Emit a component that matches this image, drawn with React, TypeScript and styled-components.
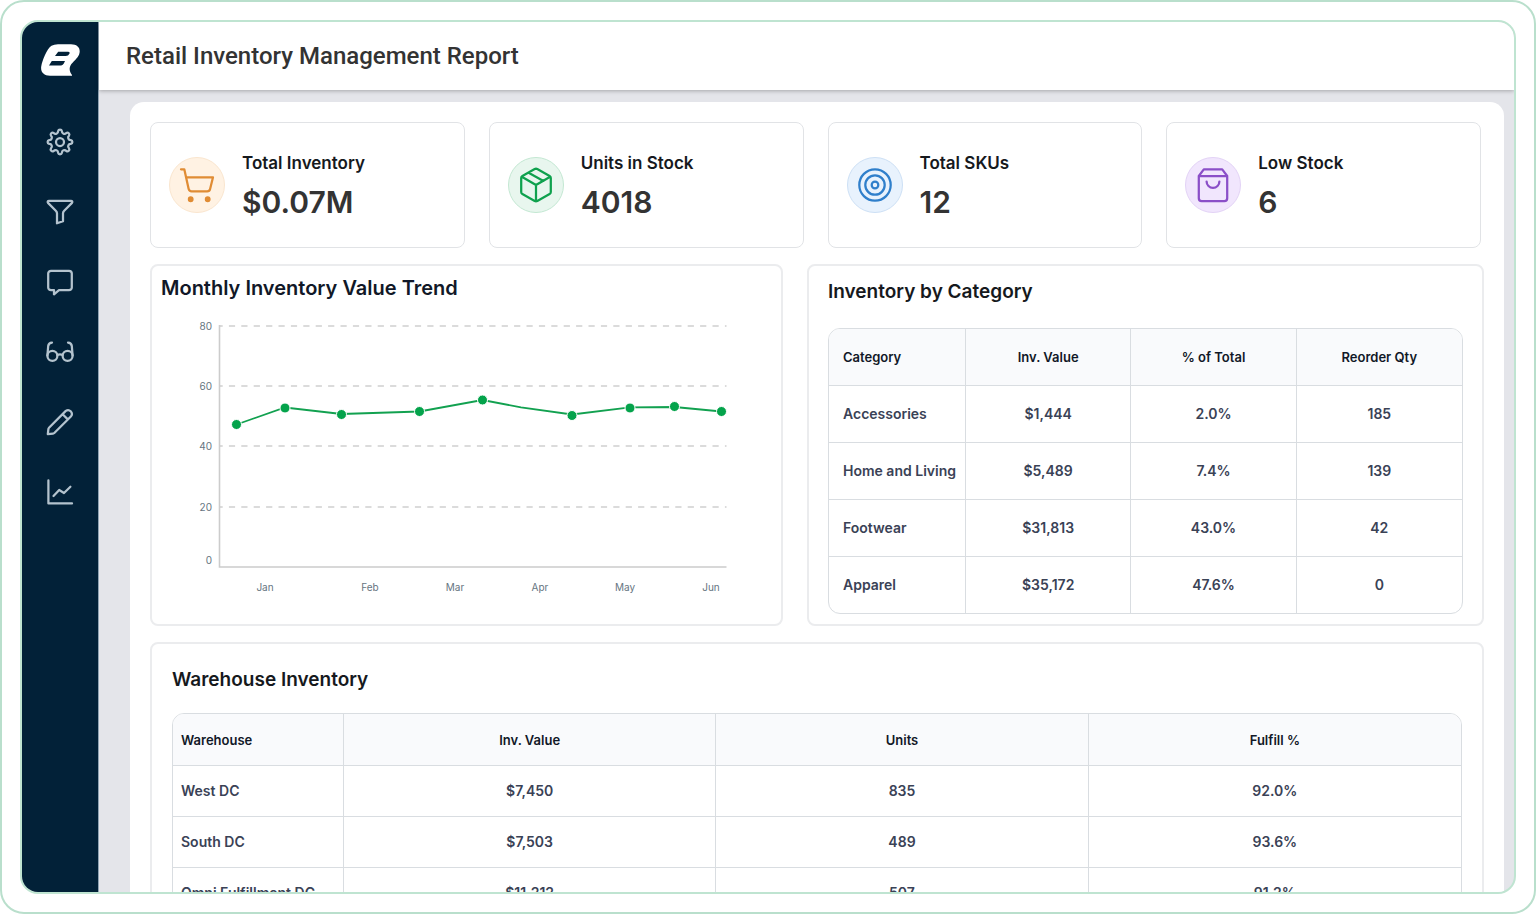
import React from "react";
import styled, { createGlobalStyle } from "styled-components";

const GlobalStyle = createGlobalStyle`
  *, *::before, *::after { box-sizing: border-box; }
  body {
    margin: 0;
    background: #ffffff;
    font-family: Inter, "Liberation Sans", sans-serif;
    color: #16191d;
  }
`;

const Frame = styled.div`
  height: 100vh;
  padding: 18px;
  border: 2px solid #b9dfcc;
  border-radius: 24px;
`;

const Shell = styled.div`
  display: flex;
  height: 100%;
  overflow: hidden;
  border: 2px solid #bfe4d1;
  border-radius: 18px;
  background: #e4e5ea;
`;

const Sidebar = styled.aside`
  flex: none;
  display: flex;
  flex-direction: column;
  align-items: center;
  width: 77px;
  padding-top: 22px;
  gap: 44px;
  background: #022138;
  border-right: 1px solid #8fa3b3;
`;

const Nav = styled.nav`
  display: flex;
  flex-direction: column;
  gap: 26px;
`;

const NavButton = styled.button`
  display: grid;
  place-items: center;
  width: 44px;
  height: 44px;
  padding: 0;
  border: 0;
  background: none;
  color: #b4c3ce;
  cursor: pointer;
`;

const Main = styled.main`
  flex: 1;
  min-width: 0;
  display: flex;
  flex-direction: column;
`;

const Header = styled.header`
  flex: none;
  display: flex;
  align-items: center;
  height: 68px;
  padding: 0 27px;
  background: #ffffff;
  box-shadow: 0 1px 4px rgba(0, 0, 0, 0.28);
`;

const Title = styled.h1`
  margin: 0;
  font: 500 24px/32px Roboto, "Liberation Sans", sans-serif;
  color: #333333;
`;

const Scroller = styled.div`
  flex: 1;
  min-height: 0;
  overflow: hidden;
  padding: 12px 10px 0 31px;
`;

const Board = styled.div`
  display: flex;
  flex-direction: column;
  gap: 16px;
  padding: 20px;
  border-radius: 14px;
  background: #ffffff;
`;

const KpiRow = styled.section`
  display: grid;
  grid-template-columns: repeat(4, 1fr);
  gap: 24px;
  padding-right: 3px;
`;

const KpiCard = styled.article`
  display: flex;
  align-items: center;
  gap: 17px;
  height: 126px;
  padding: 0 18px;
  border: 1px solid #e1e3e6;
  border-radius: 8px;
`;

const KpiBadge = styled.div<{ $ink: string; $fill: string; $edge: string }>`
  flex: none;
  display: grid;
  place-items: center;
  width: 56px;
  height: 56px;
  border: 1px solid ${(p) => p.$edge};
  border-radius: 50%;
  background: ${(p) => p.$fill};
  color: ${(p) => p.$ink};
`;

const KpiText = styled.div`
  display: flex;
  flex-direction: column;
  gap: 8px;
`;

const KpiLabel = styled.h2`
  margin: 0;
  font-size: 17px;
  font-weight: 600;
  line-height: 26px;
`;

const KpiValue = styled.p`
  margin: 0;
  font-size: 30px;
  font-weight: 600;
  line-height: 36px;
  color: #333333;
`;

const MiddleRow = styled.div`
  display: grid;
  grid-template-columns: 633fr 677fr;
  gap: 24px;
`;

const Panel = styled.section<{ $pad: string }>`
  min-width: 0;
  padding: ${(p) => p.$pad};
  border: 2px solid #ebecee;
  border-radius: 8px;
`;

const PanelTitle = styled.h2<{ $gap: number; $large?: boolean }>`
  margin: 0 0 ${(p) => p.$gap}px;
  font-size: ${(p) => (p.$large ? 20 : 19)}px;
  font-weight: 600;
  line-height: 28px;
  color: ${(p) => (p.$large ? "#111827" : "#16191d")};
`;

const Chart = styled.svg`
  display: block;
  width: 100%;
  height: auto;
  font-size: 10px;
  fill: #66757f;
`;

const TableFrame = styled.div`
  overflow: hidden;
  border: 1px solid #d9dde1;
  border-radius: 12px;
`;

const Table = styled.table<{ $first: number; $inset: number; $head: number; $row: number }>`
  width: 100%;
  table-layout: fixed;
  border-collapse: separate;
  border-spacing: 0;
  font-size: 14px;
  line-height: 20px;
  text-align: center;

  th, td {
    height: ${(p) => p.$row}px;
    padding: 0 8px;
    border-right: 1px solid #d9dde1;
    border-bottom: 1px solid #d9dde1;
    font-weight: 600;
    color: #3a4256;
  }
  thead th {
    height: ${(p) => p.$head}px;
    background: #f9fafc;
    font-size: 13px;
    color: #111827;
  }
  tr > :first-child {
    width: ${(p) => p.$first}px;
    padding: 0 0 0 ${(p) => p.$inset}px;
    text-align: left;
    white-space: nowrap;
  }
  tr > :last-child { border-right: 0; }
  tbody tr:last-child > * {
    height: ${(p) => p.$row - 1}px;
    border-bottom: 0;
  }
`;

const Icon = ({ children, size = 28 }: { children: React.ReactNode; size?: number }) => (
  <svg
    width={size}
    height={size}
    viewBox={`0 0 ${size} ${size}`}
    fill="none"
    stroke="currentColor"
    strokeWidth={2.25}
    strokeLinecap="round"
    strokeLinejoin="round"
    aria-hidden="true"
  >
    {children}
  </svg>
);

// Eight rounded teeth joined by concave arcs.
const gearPath = (() => {
  const at = (deg: number) => {
    const a = (deg * Math.PI) / 180;
    return `${(14 + 11 * Math.sin(a)).toFixed(2)} ${(14 - 11 * Math.cos(a)).toFixed(2)}`;
  };
  let d = `M${at(-10)}`;
  for (let i = 0; i < 8; i++) {
    d += `A1.95 1.95 0 0 1 ${at(i * 45 + 10)}A2.5 2.5 0 0 0 ${at(i * 45 + 35)}`;
  }
  return d + "Z";
})();

const navItems = [
  { label: "Settings", icon: <><path d={gearPath} /><circle cx="14" cy="14" r="4" /></> },
  { label: "Filter", icon: <path d="M3 2.8H25C26.3 2.8 26.7 4 26 4.9L18.2 12.7Q17 13.9 17 15.3V23.3L11 25.3V15.3Q11 13.9 9.8 12.7L2 4.9C1.3 4 1.7 2.8 3 2.8Z" /> },
  { label: "Comments", icon: <path d="M5 2.8H23A2.8 2.8 0 0 1 25.8 5.6V19.4A2.8 2.8 0 0 1 23 22.2H13L8 26.4V22.2H5A2.8 2.8 0 0 1 2.2 19.4V5.6A2.8 2.8 0 0 1 5 2.8Z" /> },
  {
    label: "View",
    icon: (
      <>
        <circle cx="6.4" cy="17.8" r="5" />
        <circle cx="21.6" cy="17.8" r="5" />
        <path d="M1.4 17.5L2.2 8Q2.6 4.8 6 4.6M26.6 17.5L25.8 8Q25.4 4.8 22 4.6M11.4 17Q14 15.6 16.6 17" />
      </>
    ),
  },
  { label: "Edit", icon: <path d="M1.8 26.2L2.4 21Q2.5 20.2 3 19.7L19.8 2.9A3.8 3.8 0 0 1 25.1 8.2L8.3 25Q7.8 25.5 7 25.6ZM16.6 6.2L21.8 11.4" /> },
  { label: "Reports", icon: <path d="M2.4 2.4V25.4H26M7.5 18L13.2 12L18 15L24.4 8.8" /> },
];

const kpis = [
  {
    label: "Total Inventory",
    value: "$0.07M",
    ink: "#e08c34",
    fill: "#fff2e3",
    edge: "#fae6cf",
    icon: (
      <>
        <path d="M2 2.3H5.3L9.6 21.8Q10.2 24.3 12.6 24.3H28.2Q30.6 24.3 31.1 22L34 10.3H7.2" />
        <circle cx="11.7" cy="32.2" r="1.8" fill="currentColor" />
        <circle cx="28.7" cy="32.2" r="1.8" fill="currentColor" />
      </>
    ),
  },
  {
    label: "Units in Stock",
    value: "4018",
    ink: "#0fa14e",
    fill: "#e8f6ee",
    edge: "#c3e7d2",
    icon: <path d="M19.3 2.1L31.6 8.9Q32.8 9.6 32.8 11V25Q32.8 26.4 31.6 27.1L19.3 33.9Q18 34.6 16.7 33.9L4.4 27.1Q3.2 26.4 3.2 25V11Q3.2 9.6 4.4 8.9L16.7 2.1Q18 1.4 19.3 2.1ZM3.8 9.7L18 18L32.2 9.7M18 18V34M10.6 5.8L25.4 13.9" />,
  },
  {
    label: "Total SKUs",
    value: "12",
    ink: "#2f7fcb",
    fill: "#e8f2fd",
    edge: "#cde0f5",
    icon: (
      <>
        <circle cx="18" cy="18" r="15.7" />
        <circle cx="18" cy="18" r="9.7" />
        <circle cx="18" cy="18" r="3.3" />
      </>
    ),
  },
  {
    label: "Low Stock",
    value: "6",
    ink: "#8b4fc8",
    fill: "#f1e6fd",
    edge: "#e3d3f6",
    icon: <path d="M8.8 2.4H27.2L32.2 9V31.2A2.8 2.8 0 0 1 29.4 34H6.6A2.8 2.8 0 0 1 3.8 31.2V9ZM3.8 9H32.2M11.6 14.5A6.4 6.4 0 0 0 24.4 14.5" />,
  },
];

const gridLines = [
  { label: "80", y: 16 },
  { label: "60", y: 76 },
  { label: "40", y: 136 },
  { label: "20", y: 197 },
];
const months: [string, number][] = [["Jan", 104], ["Feb", 209], ["Mar", 294], ["Apr", 379], ["May", 464], ["Jun", 550]];
const dots = [[75.5, 114.5], [124, 98], [180.5, 104.5], [258.5, 101.5], [321.5, 90], [411, 105.5], [469, 98], [513.5, 96.5], [560.5, 101.5]];

const TrendChart = () => (
  <Chart viewBox="0 0 611 300" role="img" aria-label="Monthly inventory value, January to June">
    {gridLines.map((g) => (
      <g key={g.label}>
        <text x="51" y={g.y + 3.5} textAnchor="end">{g.label}</text>
        <path d={`M58.5 ${g.y}H565.5`} stroke="#cfcfcf" strokeWidth="1.6" strokeDasharray="6.2 6.2" strokeDashoffset="3" />
      </g>
    ))}
    <text x="51" y="254" textAnchor="end">0</text>
    <path d="M58.5 15V257H565.5" fill="none" stroke="#cccccc" strokeWidth="1.6" />
    {months.map(([name, x]) => (
      <text key={name} x={x} y="281" textAnchor="middle">{name}</text>
    ))}
    <path
      d="M75.5 114.5L124 97.5L180.5 104L258.5 101.5L321.5 90L360 97.3L411 104.5L469 97.3L513.5 97L560.5 101.5"
      fill="none"
      stroke="#12a150"
      strokeWidth="1.8"
    />
    {dots.map(([x, y]) => (
      <circle key={x} cx={x} cy={y} r="5" fill="#04a34b" stroke="#ffffff" strokeWidth="1" />
    ))}
  </Chart>
);

type GridProps = { head: string[]; rows: string[][]; first: number; inset: number; headHeight: number; rowHeight: number };

const DataTable = ({ head, rows, first, inset, headHeight, rowHeight }: GridProps) => (
  <TableFrame>
    <Table $first={first} $inset={inset} $head={headHeight} $row={rowHeight}>
      <thead>
        <tr>{head.map((h) => <th key={h} scope="col">{h}</th>)}</tr>
      </thead>
      <tbody>
        {rows.map(([name, ...cells]) => (
          <tr key={name}>
            <th scope="row">{name}</th>
            {cells.map((c) => <td key={c}>{c}</td>)}
          </tr>
        ))}
      </tbody>
    </Table>
  </TableFrame>
);

const categoryRows = [
  ["Accessories", "$1,444", "2.0%", "185"],
  ["Home and Living", "$5,489", "7.4%", "139"],
  ["Footwear", "$31,813", "43.0%", "42"],
  ["Apparel", "$35,172", "47.6%", "0"],
];

const warehouseRows = [
  ["West DC", "$7,450", "835", "92.0%"],
  ["South DC", "$7,503", "489", "93.6%"],
  ["Omni Fulfillment DC", "$11,212", "507", "91.2%"],
];

export default function App() {
  return (
    <>
      <GlobalStyle />
      <Frame>
        <Shell>
          <Sidebar>
            <svg width="39" height="32" viewBox="0 0 39 32" role="img" aria-label="Home">
              <path
                fill="#ffffff"
                fillRule="evenodd"
                d="M10.5 1.8Q13 .2 17 .2H30C36 .2 39.3 3.6 38.6 8.4C38 13 33.6 16 30.4 20C28 23.2 28 27.4 31 31V31.8H9C2.5 31.8 -.8 27.8 .3 22C1.2 17 5.6 5 10.5 1.8ZM17.2 7.7L14 12H24.8Q27.4 12 28.4 9.8Q29.2 7.7 27 7.7ZM10.8 17L8 21.4H20.2Q22 21.4 22.8 19.6L24 17Z"
              />
            </svg>
            <Nav aria-label="Main">
              {navItems.map((item) => (
                <NavButton key={item.label} type="button" aria-label={item.label}>
                  <Icon>{item.icon}</Icon>
                </NavButton>
              ))}
            </Nav>
          </Sidebar>
          <Main>
            <Header>
              <Title>Retail Inventory Management Report</Title>
            </Header>
            <Scroller>
              <Board>
                <KpiRow>
                  {kpis.map((k) => (
                    <KpiCard key={k.label}>
                      <KpiBadge $ink={k.ink} $fill={k.fill} $edge={k.edge}>
                        <Icon size={36}>{k.icon}</Icon>
                      </KpiBadge>
                      <KpiText>
                        <KpiLabel>{k.label}</KpiLabel>
                        <KpiValue>{k.value}</KpiValue>
                      </KpiText>
                    </KpiCard>
                  ))}
                </KpiRow>
                <MiddleRow>
                  <Panel $pad="8px 9px">
                    <PanelTitle $gap={8} $large>Monthly Inventory Value Trend</PanelTitle>
                    <TrendChart />
                  </Panel>
                  <Panel $pad="12px 19px 10px">
                    <PanelTitle $gap={22}>Inventory by Category</PanelTitle>
                    <DataTable
                      head={["Category", "Inv. Value", "% of Total", "Reorder Qty"]}
                      rows={categoryRows}
                      first={137}
                      inset={14}
                      headHeight={57}
                      rowHeight={57}
                    />
                  </Panel>
                </MiddleRow>
                <Panel $pad="22px 20px">
                  <PanelTitle $gap={19}>Warehouse Inventory</PanelTitle>
                  <DataTable
                    head={["Warehouse", "Inv. Value", "Units", "Fulfill %"]}
                    rows={warehouseRows}
                    first={171}
                    inset={8}
                    headHeight={52}
                    rowHeight={51}
                  />
                </Panel>
              </Board>
            </Scroller>
          </Main>
        </Shell>
      </Frame>
    </>
  );
}
